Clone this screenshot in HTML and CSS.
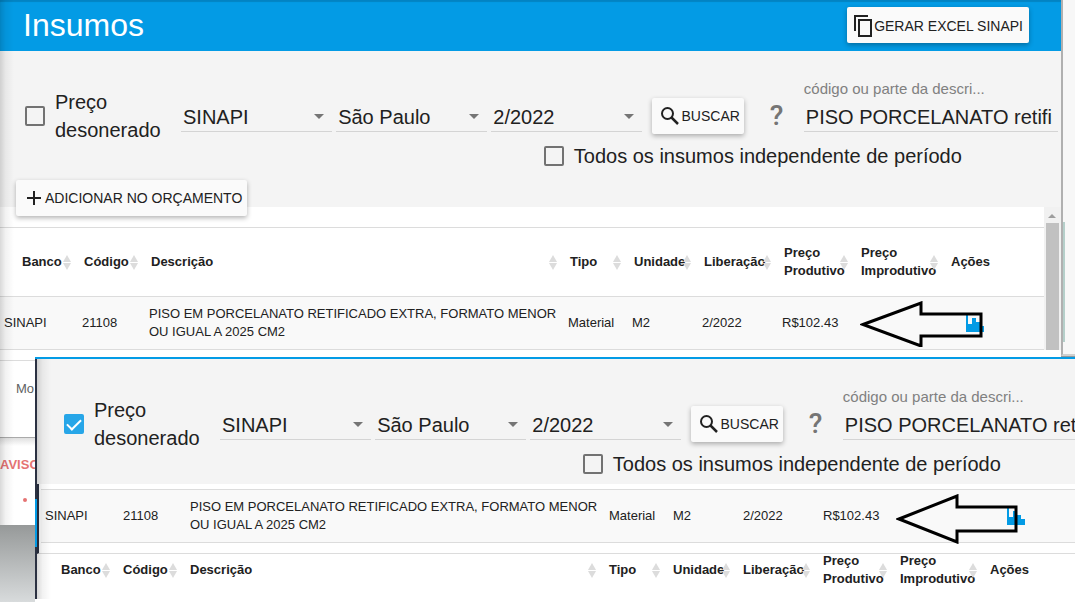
FILE: index.html
```html
<!DOCTYPE html>
<html lang="pt-BR">
<head>
<meta charset="utf-8">
<title>Insumos</title>
<link rel="stylesheet" href="styles.css">
</head>
<body>
<div class="desk">
  <main class="screen screen-back">
    <header class="topbar">
      <h1 class="title">Insumos</h1>
      <button class="btn btn-excel" type="button">
        <svg class="icon icon-copy" viewBox="0 0 20 24" aria-hidden="true"><path d="M2 17V2H15M6 6H18V22H6Z" fill="none" stroke="#212121" stroke-width="2"/></svg>
        GERAR EXCEL SINAPI
      </button>
    </header>
    <form class="filters">
      <div class="filter-row">
        <label class="check check-price"><input class="box" type="checkbox"><span>Preço desonerado</span></label>
        <div class="selects">
          <div class="pick"><select aria-label="Banco"><option>SINAPI</option></select></div>
          <div class="pick"><select aria-label="Estado"><option>São Paulo</option></select></div>
          <div class="pick"><select aria-label="Período"><option>2/2022</option></select></div>
        </div>
        <button class="btn btn-search" type="button">
          <svg class="icon icon-search" viewBox="0 0 18 18" aria-hidden="true"><circle cx="6.500" cy="6.500" r="5.500" fill="none" stroke="#212121" stroke-width="2"/><path d="M10.500 10.500L17 17" stroke="#212121" stroke-width="2.500"/></svg>
          BUSCAR
        </button>
        <span class="help">?</span>
        <div class="search"><label for="q1">código ou parte da descri...</label><input id="q1" type="text" value="PISO PORCELANATO retificado"></div>
      </div>
      <label class="check check-all"><input class="box" type="checkbox"><span>Todos os insumos independente de período</span></label>
      <button class="btn btn-add" type="button">
        <svg class="icon icon-plus" viewBox="0 0 14 14" aria-hidden="true"><path d="M7 0V14M0 7H14" stroke="#212121" stroke-width="2"/></svg>
        ADICIONAR NO ORÇAMENTO
      </button>
    </form>
    <div class="results">
      <div class="sheet">
        <table class="grid">
          <colgroup><col class="c-bank"><col class="c-code"><col><col class="c-type"><col class="c-unit"><col class="c-date"><col class="c-prod"><col class="c-improd"><col class="c-act"></colgroup>
          <thead>
            <tr><th class="sort">Banco</th><th class="sort">Código</th><th class="sort">Descrição</th><th class="sort">Tipo</th><th class="sort">Unidade</th><th class="sort">Liberação</th><th class="sort">Preço Produtivo</th><th class="sort">Preço Improdutivo</th><th>Ações</th></tr>
          </thead>
          <tbody>
            <tr><td>SINAPI</td><td>21108</td><td>PISO EM PORCELANATO RETIFICADO EXTRA, FORMATO MENOR OU IGUAL A 2025 CM2</td><td>Material</td><td>M2</td><td>2/2022</td><td>R$102.43</td><td></td>
              <td class="act">
                <svg class="chart" viewBox="0 0 18 17" aria-hidden="true"><path d="M0 0H2V9H6V3H10V7H14V11H18V17H0Z" fill="#039be5"/></svg>
                <svg class="arrow arrow-a" viewBox="0 0 124 46" aria-hidden="true"><path d="M3 23.500L61 2V13H121V35H61V45Z" fill="none" stroke="#000" stroke-width="3"/></svg>
              </td></tr>
          </tbody>
        </table>
      </div>
      <div class="scroll" aria-hidden="true"><span class="scroll-up"></span><span class="thumb"></span></div>
    </div>
    <p class="count">Mo</p>
    <section class="notice">
      <h2>AVISO</h2>
      <span class="dot"></span>
    </section>
  </main>
  <aside class="edge"><span class="edge-mark"></span></aside>

  <section class="front">
    <div class="screen">
      <form class="filters">
        <div class="filter-row">
          <label class="check check-price"><input class="box" type="checkbox" checked><span>Preço desonerado</span></label>
          <div class="selects">
            <div class="pick"><select aria-label="Banco"><option>SINAPI</option></select></div>
            <div class="pick"><select aria-label="Estado"><option>São Paulo</option></select></div>
            <div class="pick"><select aria-label="Período"><option>2/2022</option></select></div>
          </div>
          <button class="btn btn-search" type="button">
            <svg class="icon icon-search" viewBox="0 0 18 18" aria-hidden="true"><circle cx="6.500" cy="6.500" r="5.500" fill="none" stroke="#212121" stroke-width="2"/><path d="M10.500 10.500L17 17" stroke="#212121" stroke-width="2.500"/></svg>
            BUSCAR
          </button>
          <span class="help">?</span>
          <div class="search"><label for="q2">código ou parte da descri...</label><input id="q2" type="text" value="PISO PORCELANATO retificado"></div>
        </div>
        <label class="check check-all"><input class="box" type="checkbox"><span>Todos os insumos independente de período</span></label>
      </form>
      <div class="strip">
        <div class="sheet">
          <table class="grid">
            <colgroup><col class="c-bank"><col class="c-code"><col><col class="c-type"><col class="c-unit"><col class="c-date"><col class="c-prod"><col class="c-improd"><col class="c-act"></colgroup>
            <tbody>
              <tr><td>SINAPI</td><td>21108</td><td>PISO EM PORCELANATO RETIFICADO EXTRA, FORMATO MENOR OU IGUAL A 2025 CM2</td><td>Material</td><td>M2</td><td>2/2022</td><td>R$102.43</td><td></td>
                <td class="act">
                  <svg class="chart" viewBox="0 0 18 17" aria-hidden="true"><path d="M0 0H2V9H6V3H10V7H14V11H18V17H0Z" fill="#039be5"/></svg>
                  <svg class="arrow arrow-b" viewBox="0 0 122 50" aria-hidden="true"><path d="M3 25L61 2V13H120V37H61V48Z" fill="none" stroke="#000" stroke-width="3"/></svg>
                </td></tr>
            </tbody>
          </table>
        </div>
      </div>
      <div class="sheet sheet-foot">
        <table class="grid grid-foot">
          <colgroup><col class="c-bank"><col class="c-code"><col><col class="c-type"><col class="c-unit"><col class="c-date"><col class="c-prod"><col class="c-improd"><col class="c-act"></colgroup>
          <thead>
            <tr><th class="sort">Banco</th><th class="sort">Código</th><th class="sort">Descrição</th><th class="sort">Tipo</th><th class="sort">Unidade</th><th class="sort">Liberação</th><th class="sort">Preço Produtivo</th><th class="sort">Preço Improdutivo</th><th>Ações</th></tr>
          </thead>
        </table>
      </div>
    </div>
  </section>
</div>
</body>
</html>
```
FILE: styles.css
```css
* { box-sizing: border-box; }

body {
  margin: 0;
  font-family: "Liberation Sans", Arial, sans-serif;
  font-size: 13px;
  line-height: 18px;
  color: #212121;
  background: #fff;
}

.desk {
  position: relative;
  display: flex;
  align-items: flex-start;
  min-height: 100vh;
  overflow: hidden;
  background: linear-gradient(#969999 525px, #d8dbdc 602px);
}

.screen { width: calc(100vw - 14px); flex: none; }
.screen-back { position: relative; }

/* soft shade along the left side of each window */
.screen-back::after,
.front::after {
  content: "";
  position: absolute;
  inset: 0 auto 0 0;
  width: 14px;
  background: linear-gradient(to right, rgba(0, 0, 0, .15), rgba(0, 0, 0, .05) 40%, transparent);
  pointer-events: none;
}
.front::after { left: 2px; }

.topbar {
  display: flex;
  align-items: center;
  justify-content: space-between;
  height: 51px;
  padding: 0 32px 1px 23px;
  background: #039be5;
  box-shadow: inset 0 2px 1px rgba(0, 0, 0, .15);
}

.title {
  margin: 0;
  font-size: 32px;
  line-height: 36px;
  font-weight: 400;
  color: #fff;
}

.btn {
  display: flex;
  align-items: center;
  flex: none;
  gap: 3px;
  height: 36px;
  padding: 0 6px 0 8px;
  border: 0;
  border-radius: 2px;
  background: #fafafa;
  box-shadow: 0 2px 5px rgba(0, 0, 0, .3);
  font: 14px/18px "Liberation Sans", Arial, sans-serif;
  color: #212121;
  white-space: nowrap;
}
.btn-excel { gap: 1px; padding: 2px 6px 0; }

.icon { flex: none; }
.icon-copy { width: 20px; height: 24px; }
.icon-search { width: 18px; height: 18px; }
.icon-plus { width: 14px; height: 14px; }

.filters {
  padding: 29px 3px 6px 0;
  background: #f4f4f4;
}

.filter-row {
  display: flex;
  align-items: center;
  height: 72px;
  padding-left: 25px;
}

.check {
  display: flex;
  align-items: center;
  gap: 10px;
  font-size: 20px;
  line-height: 28px;
}
.check-price { width: 156px; flex: none; }
.check-price span { width: 110px; }
.check-all { width: max-content; margin: -10px 0 0 51.4%; }

.box {
  appearance: none;
  flex: none;
  display: grid;
  place-items: center;
  width: 20px;
  height: 20px;
  margin: 0;
  border: 2px solid #727272;
  border-radius: 2px;
}
.box:checked { border-color: #27a6e8; background: #27a6e8; }
.box:checked::after {
  content: "";
  width: 6px;
  height: 12px;
  margin-bottom: 3px;
  border: solid #fff;
  border-width: 0 2px 2px 0;
  rotate: 45deg;
}

.selects { display: flex; flex: 463; gap: 4px; }
.pick { position: relative; flex: 1; min-width: 0; }
.pick::after {
  content: "";
  position: absolute;
  right: 8px;
  top: 14px;
  border: 5px solid transparent;
  border-top-color: #757575;
  border-bottom: 0;
  pointer-events: none;
}
.pick select {
  appearance: none;
  display: block;
  width: 100%;
  height: 32px;
  padding: 2px 20px 0 2px;
  border: 0;
  border-bottom: 1px solid #d4d4d4;
  border-radius: 0;
  background: none;
  font: 20px/28px "Liberation Sans", Arial, sans-serif;
  color: #212121;
}

.btn-search { margin-left: 10px; padding: 0 4px 0 9px; gap: 2px; }

.help {
  flex: none;
  width: 14px;
  margin: 0 20px 0 26px;
  font: 500 28px/32px Roboto, sans-serif;
  color: #757575;
}

.search {
  flex: 255;
  align-self: stretch;
  min-width: 0;
}
.search label {
  display: block;
  font-size: 15px;
  line-height: 18px;
  color: #808080;
}
.search input {
  display: block;
  width: 100%;
  height: 34px;
  padding: 5px 6px 0 2px;
  border: 0;
  border-bottom: 1px solid #d4d4d4;
  background: none;
  font: 20px/28px "Liberation Sans", Arial, sans-serif;
  color: #212121;
}

.btn-add {
  position: relative;
  gap: 4px;
  margin: 10px 0 -15px 16px;
  padding: 0 5px 0 11px;
}

.results { display: flex; }
.screen-back .results .sheet { padding-top: 20px; background: #fff; }
.sheet { width: calc(100vw - 31px); flex: none; }

.grid {
  width: 100%;
  table-layout: fixed;
  border-spacing: 0;
  background: #fff;
}
.c-bank { width: 80px; }
.c-code { width: 67px; }
.c-type { width: 64px; }
.c-unit { width: 70px; }
.c-date { width: 80px; }
.c-prod { width: 77px; }
.c-improd { width: 90px; }
.c-act { width: 97px; }

.grid th {
  position: relative;
  height: 69px;
  padding: 0 0 0 4px;
  border-top: 1px solid #dcdcdc;
  font-weight: 700;
  text-align: left;
}
.grid th:first-child { padding-left: 22px; }
.grid td {
  height: 54px;
  padding: 0 0 0 2px;
  border: solid #dcdcdc;
  border-width: 1px 0;
  background: #f9f9f9;
}
.grid td:first-child { padding-left: 4px; }

/* sort handles sit over the end of the heading text */
.sort::before,
.sort::after {
  content: "";
  position: absolute;
  right: 9px;
  border: 4px solid transparent;
}
.sort::before { bottom: 50%; border-top: 0; border-bottom: 7px solid #dcdcdc; }
.sort::after { top: calc(50% + 1px); border-bottom: 0; border-top: 7px solid #dcdcdc; }

.grid .act { position: relative; padding-left: 19px; }
.chart { display: block; width: 18px; height: 17px; }
.arrow { position: absolute; top: 4px; }
.arrow-a { left: -87px; width: 124px; height: 46px; }
.arrow-b { left: -92px; width: 122px; height: 50px; }

.scroll {
  flex: 1;
  display: flex;
  flex-direction: column;
  align-items: center;
  gap: 5px;
  padding: 7px 2px 0 1px;
  background: #f1f1f1;
}
.scroll-up {
  border: 4px solid transparent;
  border-top: 0;
  border-bottom-color: #9e9e9e;
}
.thumb { width: 13px; flex: 1; background: #c1c1c1; }

.count {
  margin: 10px 0 0;
  padding: 19px 0 39px 16px;
  border-top: 1px solid #dcdcdc;
  background: #fff;
  box-shadow: 0 -10px #fff;
  color: #616161;
}

.notice {
  height: 88px;
  padding-top: 18px;
  border-top: 1px solid #aaa;
  background: linear-gradient(#e0e0e0, #fff 8px);
  color: #e57373;
}
.notice h2 { margin: 0; font-size: 13px; line-height: 18px; }
.dot {
  display: block;
  width: 4px;
  height: 4px;
  margin: 24px 0 0 23px;
  border-radius: 50%;
  background: #e57373;
}

.edge {
  flex: 1;
  height: 356px;
  padding-top: 222px;
  border-left: 2px solid #b0b0b0;
  border-bottom: 2px solid #d0d0d0;
  background: #f7f7f7;
}
.edge-mark { display: block; width: 2px; height: 120px; background: #b5cfca; }

/* the left rail is dark, with a blue stretch beside the result row */
.front {
  position: absolute;
  inset: 357px 0 3px 35px;
  overflow: hidden;
  padding-left: 4px;
  border-top: 2px solid #039be5;
  background:
    linear-gradient(#2b3142 140px, #039be5 140px 188px, #2b3142 188px) left / 2px 100% no-repeat,
    #fff;
  box-shadow: 0 3px #fff;
}
.front .filters { box-shadow: -2px 0 #f4f4f4; }

.strip {
  width: max-content;
  margin-left: -2px;
  padding: 5px 0 10px 2px;
  border-left: 2px solid #2b3142;
  border-bottom: 1px solid #dcdcdc;
}
.sheet-foot { margin-top: -2px; }
.grid-foot { background: none; }
.grid-foot th { height: 36px; border-top: 0; }
```
